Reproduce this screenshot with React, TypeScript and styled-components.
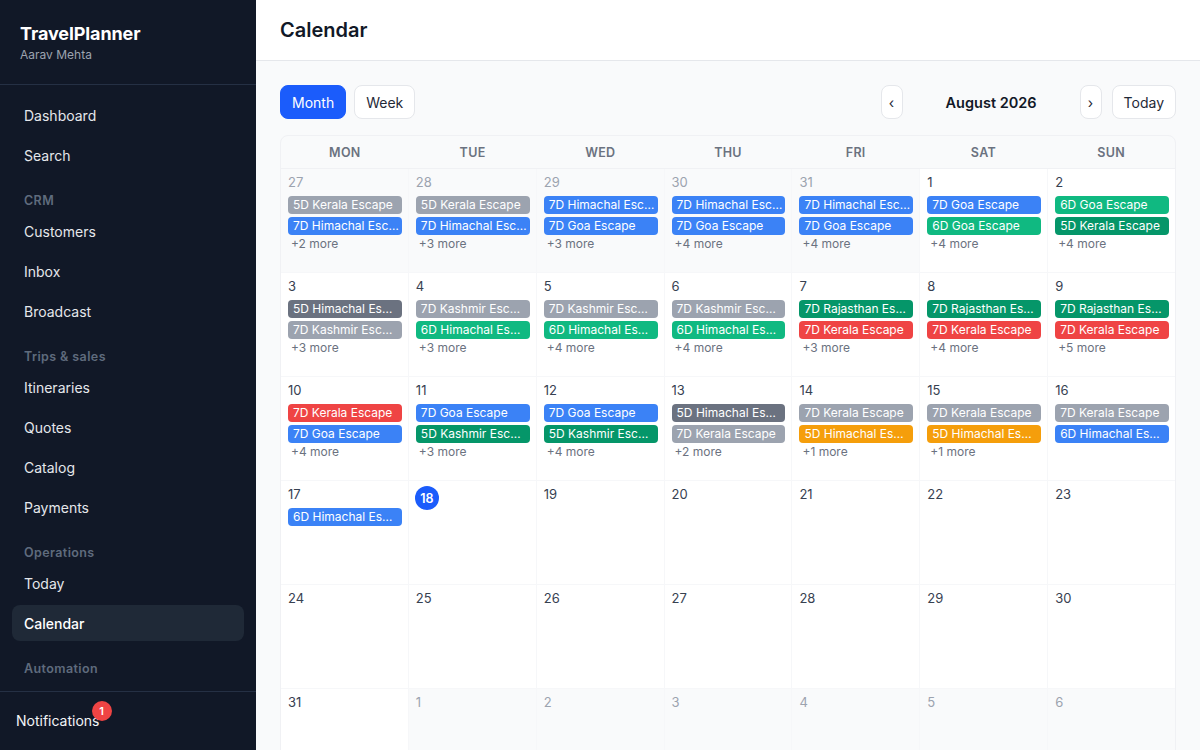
import React from 'react'
import styled, { createGlobalStyle } from 'styled-components'

const GlobalStyle = createGlobalStyle`
	* { box-sizing: border-box; }
	html, body { margin: 0; padding: 0; }
	body {
		font-family: Inter, "Noto Sans", "Liberation Sans", sans-serif;
		background: #f9fafb;
		color: #111827;
		-webkit-font-smoothing: antialiased;
	}
`

type Tone = 'gray' | 'slate' | 'blue' | 'green' | 'emerald' | 'red' | 'amber'

const toneColors: Record<Tone, string> = {
	gray: '#9ca3af',
	slate: '#6b7280',
	blue: '#3b82f6',
	green: '#10b981',
	emerald: '#059669',
	red: '#ef4444',
	amber: '#f59e0b',
}

type Trip = { title: string; tone: Tone }
type Day = { date: number; outside?: boolean; today?: boolean; trips?: Trip[]; more?: number }

const t = (title: string, tone: Tone): Trip => ({ title, tone })

// six weeks shown for August 2026, starting Monday 27 July
const weeks: Day[][] = [
	[
		{ date: 27, outside: true, trips: [t('5D Kerala Escape', 'gray'), t('7D Himachal Escape', 'blue')], more: 2 },
		{ date: 28, outside: true, trips: [t('5D Kerala Escape', 'gray'), t('7D Himachal Escape', 'blue')], more: 3 },
		{ date: 29, outside: true, trips: [t('7D Himachal Escape', 'blue'), t('7D Goa Escape', 'blue')], more: 3 },
		{ date: 30, outside: true, trips: [t('7D Himachal Escape', 'blue'), t('7D Goa Escape', 'blue')], more: 4 },
		{ date: 31, outside: true, trips: [t('7D Himachal Escape', 'blue'), t('7D Goa Escape', 'blue')], more: 4 },
		{ date: 1, trips: [t('7D Goa Escape', 'blue'), t('6D Goa Escape', 'green')], more: 4 },
		{ date: 2, trips: [t('6D Goa Escape', 'green'), t('5D Kerala Escape', 'emerald')], more: 4 },
	],
	[
		{ date: 3, trips: [t('5D Himachal Escape', 'slate'), t('7D Kashmir Escape', 'gray')], more: 3 },
		{ date: 4, trips: [t('7D Kashmir Escape', 'gray'), t('6D Himachal Escape', 'green')], more: 3 },
		{ date: 5, trips: [t('7D Kashmir Escape', 'gray'), t('6D Himachal Escape', 'green')], more: 4 },
		{ date: 6, trips: [t('7D Kashmir Escape', 'gray'), t('6D Himachal Escape', 'green')], more: 4 },
		{ date: 7, trips: [t('7D Rajasthan Escape', 'emerald'), t('7D Kerala Escape', 'red')], more: 3 },
		{ date: 8, trips: [t('7D Rajasthan Escape', 'emerald'), t('7D Kerala Escape', 'red')], more: 4 },
		{ date: 9, trips: [t('7D Rajasthan Escape', 'emerald'), t('7D Kerala Escape', 'red')], more: 5 },
	],
	[
		{ date: 10, trips: [t('7D Kerala Escape', 'red'), t('7D Goa Escape', 'blue')], more: 4 },
		{ date: 11, trips: [t('7D Goa Escape', 'blue'), t('5D Kashmir Escape', 'emerald')], more: 3 },
		{ date: 12, trips: [t('7D Goa Escape', 'blue'), t('5D Kashmir Escape', 'emerald')], more: 4 },
		{ date: 13, trips: [t('5D Himachal Escape', 'slate'), t('7D Kerala Escape', 'gray')], more: 2 },
		{ date: 14, trips: [t('7D Kerala Escape', 'gray'), t('5D Himachal Escape', 'amber')], more: 1 },
		{ date: 15, trips: [t('7D Kerala Escape', 'gray'), t('5D Himachal Escape', 'amber')], more: 1 },
		{ date: 16, trips: [t('7D Kerala Escape', 'gray'), t('6D Himachal Escape', 'blue')] },
	],
	[
		{ date: 17, trips: [t('6D Himachal Escape', 'blue')] },
		{ date: 18, today: true },
		{ date: 19 },
		{ date: 20 },
		{ date: 21 },
		{ date: 22 },
		{ date: 23 },
	],
	[24, 25, 26, 27, 28, 29, 30].map((date) => ({ date })),
	[{ date: 31 }, ...[1, 2, 3, 4, 5, 6].map((date) => ({ date, outside: true }))],
]

const weekdays = ['MON', 'TUE', 'WED', 'THU', 'FRI', 'SAT', 'SUN']

type NavEntry = { label: string; section?: boolean; active?: boolean }

const nav: NavEntry[] = [
	{ label: 'Dashboard' },
	{ label: 'Search' },
	{ label: 'CRM', section: true },
	{ label: 'Customers' },
	{ label: 'Inbox' },
	{ label: 'Broadcast' },
	{ label: 'Trips & sales', section: true },
	{ label: 'Itineraries' },
	{ label: 'Quotes' },
	{ label: 'Catalog' },
	{ label: 'Payments' },
	{ label: 'Operations', section: true },
	{ label: 'Today' },
	{ label: 'Calendar', active: true },
	{ label: 'Automation', section: true },
]

const App: React.FC = () => {
	return (
		<>
			<GlobalStyle />
			<Shell>
				<Sidebar>
					<Brand>
						<BrandName>TravelPlanner</BrandName>
						<UserName>Aarav Mehta</UserName>
					</Brand>
					<Nav>
						{nav.map((item) =>
							item.section
								? <SectionLabel key={item.label}>{item.label}</SectionLabel>
								: <NavItem key={item.label} $active={item.active}>{item.label}</NavItem>
						)}
					</Nav>
					<SidebarFooter>
						<Notifications>
							Notifications
							<Badge>1</Badge>
						</Notifications>
					</SidebarFooter>
				</Sidebar>

				<Main>
					<TopBar>
						<PageTitle>Calendar</PageTitle>
					</TopBar>
					<Content>
						<Toolbar>
							<Group>
								<ToggleButton $active>Month</ToggleButton>
								<ToggleButton>Week</ToggleButton>
							</Group>
							<Group>
								<ArrowButton>‹</ArrowButton>
								<MonthTitle>August 2026</MonthTitle>
								<ArrowButton>›</ArrowButton>
								<ToggleButton $spaced>Today</ToggleButton>
							</Group>
						</Toolbar>

						<Board>
							<WeekHeader>
								{weekdays.map((d) => <WeekdayName key={d}>{d}</WeekdayName>)}
							</WeekHeader>
							<DayGrid>
								{weeks.flat().map((day, i) => (
									<Cell key={i} $outside={day.outside}>
										<DateRow>
											{day.today
												? <TodayMark>{day.date}</TodayMark>
												: <DateNum $outside={day.outside}>{day.date}</DateNum>}
										</DateRow>
										{day.trips && (
											<TripList>
												{day.trips.map((trip, j) => (
													<TripChip key={j} $tone={trip.tone}>{trip.title}</TripChip>
												))}
											</TripList>
										)}
										{day.more ? <MoreLink>+{day.more} more</MoreLink> : null}
									</Cell>
								))}
							</DayGrid>
						</Board>
					</Content>
				</Main>
			</Shell>
		</>
	)
}
export default App

const Shell = styled.div`
	display: flex;
	height: 100vh;
	overflow: hidden;
`

const Sidebar = styled.aside`
	width: 256px;
	flex-shrink: 0;
	display: flex;
	flex-direction: column;
	background: #111827;
	color: #e5e7eb;
`

const Brand = styled.div`
	padding: 22px 20px 20px;
	border-bottom: 1px solid #253044;
`

const BrandName = styled.div`
	font-size: 18px;
	line-height: 24px;
	font-weight: 700;
	color: #ffffff;
	letter-spacing: -0.1px;
`

const UserName = styled.div`
	font-size: 12px;
	line-height: 18px;
	color: #9ca3af;
`

const Nav = styled.nav`
	flex: 1;
	display: flex;
	flex-direction: column;
	gap: 4px;
	padding: 12px;
	overflow: hidden;
`

const SectionLabel = styled.div`
	padding: 16px 12px 0;
	font-size: 12.5px;
	line-height: 16px;
	font-weight: 600;
	letter-spacing: 0.4px;
	color: #5f6b7d;
`

const NavItem = styled.div<{ $active?: boolean }>`
	height: 36px;
	flex-shrink: 0;
	display: flex;
	align-items: center;
	padding: 0 12px;
	border-radius: 8px;
	font-size: 14px;
	color: ${(p) => (p.$active ? '#ffffff' : '#e5e7eb')};
	font-weight: ${(p) => (p.$active ? 500 : 400)};
	background: ${(p) => (p.$active ? '#1f2937' : 'transparent')};
`

const SidebarFooter = styled.div`
	border-top: 1px solid #253044;
	padding: 18px 16px;
`

const Notifications = styled.span`
	position: relative;
	font-size: 14px;
	line-height: 22px;
	color: #f3f4f6;
`

const Badge = styled.span`
	position: absolute;
	top: -11px;
	right: -12px;
	width: 20px;
	height: 20px;
	border-radius: 50%;
	background: #ef4444;
	color: #ffffff;
	font-size: 11px;
	font-weight: 600;
	display: flex;
	align-items: center;
	justify-content: center;
`

const Main = styled.main`
	flex: 1;
	display: flex;
	flex-direction: column;
	min-width: 0;
`

const TopBar = styled.header`
	height: 61px;
	flex-shrink: 0;
	display: flex;
	align-items: center;
	padding: 0 24px;
	background: #ffffff;
	border-bottom: 1px solid #e5e7eb;
`

const PageTitle = styled.h1`
	margin: 0;
	font-size: 20px;
	font-weight: 600;
	color: #111827;
`

const Content = styled.div`
	flex: 1;
	padding: 24px;
	display: flex;
	flex-direction: column;
	gap: 16px;
	overflow: hidden;
`

const Toolbar = styled.div`
	display: flex;
	justify-content: space-between;
	align-items: center;
	flex-shrink: 0;
`

const Group = styled.div`
	display: flex;
	align-items: center;
	gap: 8px;
`

const ToggleButton = styled.button<{ $active?: boolean; $spaced?: boolean }>`
	height: 34px;
	padding: 0 11px;
	border-radius: 8px;
	font-family: inherit;
	font-size: 14px;
	border: 1px solid ${(p) => (p.$active ? '#1b5cfb' : '#e5e7eb')};
	background: ${(p) => (p.$active ? '#1b5cfb' : '#ffffff')};
	color: ${(p) => (p.$active ? '#ffffff' : '#1f2937')};
	margin-left: ${(p) => (p.$spaced ? 2 : 0)}px;
`

const ArrowButton = styled.button`
	width: 22px;
	height: 34px;
	padding: 0;
	border-radius: 8px;
	border: 1px solid #e5e7eb;
	background: #ffffff;
	font-family: inherit;
	font-size: 14px;
	color: #1f2937;
`

const MonthTitle = styled.div`
	width: 161px;
	text-align: center;
	font-size: 14.5px;
	font-weight: 600;
	color: #111827;
`

const Board = styled.section`
	flex-shrink: 0;
	border: 1px solid #f0f1f4;
	border-radius: 8px 8px 0 0;
	overflow: hidden;
	background: #f9fafb;
`

const WeekHeader = styled.div`
	display: grid;
	grid-template-columns: repeat(7, 1fr);
	height: 33px;
	border-bottom: 1px solid #f0f1f4;
`

const WeekdayName = styled.div`
	display: flex;
	align-items: center;
	justify-content: center;
	font-size: 12.5px;
	font-weight: 600;
	color: #6b7280;
	letter-spacing: 0.3px;
`

const DayGrid = styled.div`
	display: grid;
	grid-template-columns: repeat(7, 1fr);
	grid-auto-rows: 103px;
	gap: 1px;
	background: #f6f7f9;
`

const Cell = styled.div<{ $outside?: boolean }>`
	padding: 5px 6px 0 7px;
	background: ${(p) => (p.$outside ? '#f9fafb' : '#ffffff')};
	display: flex;
	flex-direction: column;
	min-width: 0;
`

const DateRow = styled.div`
	height: 16px;
	display: flex;
	align-items: flex-start;
`

const DateNum = styled.span<{ $outside?: boolean }>`
	font-size: 13px;
	line-height: 16px;
	color: ${(p) => (p.$outside ? '#9ca3af' : '#374151')};
`

const TodayMark = styled.span`
	width: 24px;
	height: 24px;
	margin: 0 0 0 -1px;
	border-radius: 50%;
	background: #1b5cfb;
	color: #ffffff;
	font-size: 12.5px;
	font-weight: 600;
	display: flex;
	align-items: center;
	justify-content: center;
`

const TripList = styled.div`
	margin-top: 6px;
	display: flex;
	flex-direction: column;
	gap: 3px;
`

const TripChip = styled.div<{ $tone: Tone }>`
	height: 18px;
	line-height: 18px;
	padding: 0 3px 0 5px;
	border-radius: 4px;
	background: ${(p) => toneColors[p.$tone]};
	color: #ffffff;
	font-size: 12px;
	white-space: nowrap;
	overflow: hidden;
	text-overflow: ellipsis;
`

const MoreLink = styled.div`
	margin-top: 1px;
	padding-left: 3px;
	font-size: 12px;
	line-height: 16px;
	color: #6b7280;
`
